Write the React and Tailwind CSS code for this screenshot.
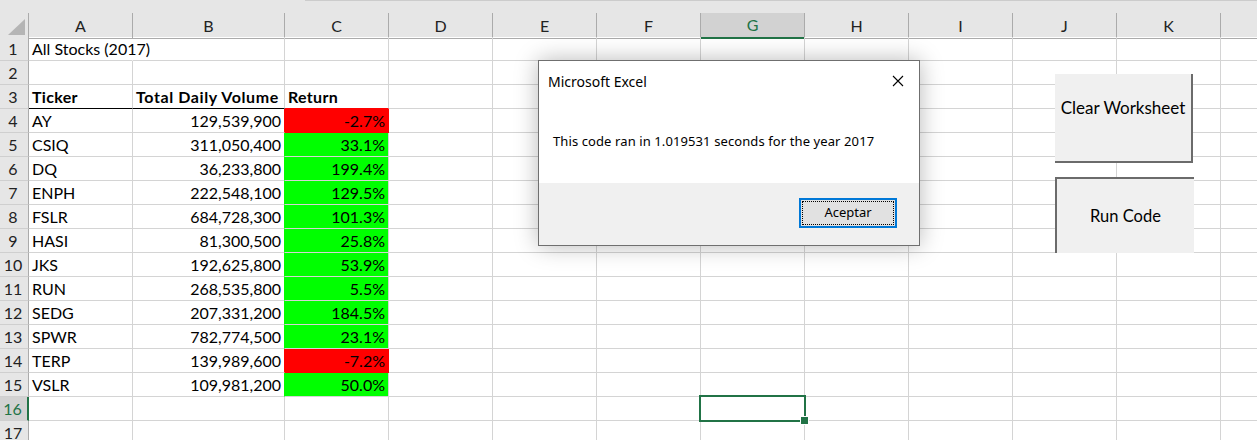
import React from "react";

const COLS = ["A", "B", "C", "D", "E", "F", "G", "H", "I", "J", "K", ""];
const GRID =
  "grid grid-cols-[29px_104px_152px_104px_104px_104px_104px_104px_104px_104px_104px_104px_1fr]";

const stocks = [
  ["AY", "129,539,900", "-2.7%", false],
  ["CSIQ", "311,050,400", "33.1%", true],
  ["DQ", "36,233,800", "199.4%", true],
  ["ENPH", "222,548,100", "129.5%", true],
  ["FSLR", "684,728,300", "101.3%", true],
  ["HASI", "81,300,500", "25.8%", true],
  ["JKS", "192,625,800", "53.9%", true],
  ["RUN", "268,535,800", "5.5%", true],
  ["SEDG", "207,331,200", "184.5%", true],
  ["SPWR", "782,774,500", "23.1%", true],
  ["TERP", "139,989,600", "-7.2%", false],
  ["VSLR", "109,981,200", "50.0%", true],
];

const cellFont = { fontFamily: "Lato, 'Liberation Sans', sans-serif" };

function Cell({ children, className = "" }) {
  return (
    <div
      className={`h-[24px] border-r border-b border-[#d4d4d4] flex items-center px-[3px] pt-[1px] whitespace-nowrap text-[16px] text-black ${className}`}
    >
      {children}
    </div>
  );
}

function RowHead({ n, active }) {
  return (
    <div
      className={`h-[24px] flex items-center justify-center pr-[2px] pt-[1px] text-[16px] border-b border-[#cfcfcf] ${
        active
          ? "bg-[#d2d2d2] text-[#217346] border-r-2 border-r-[#217346]"
          : "bg-[#e6e6e6] text-[#222] border-r border-r-[#ababab]"
      }`}
    >
      {n}
    </div>
  );
}

function SheetRow({ n }) {
  const s = n >= 4 && n <= 15 ? stocks[n - 4] : null;
  const fill = s ? (s[3] ? "bg-[#00ff00]" : "bg-[#ff0000]") : "";
  const fillBorder = s ? (s[3] ? "border-[#00ff00]" : "border-[#ff0000]") : "";
  const bRight = s ? (s[3] ? "border-r-[#00ff00]" : "border-r-[#ff0000]") : "";

  let a = null, b = null, c = null;
  let aCls = "", bCls = "", cCls = "";
  if (n === 1) {
    a = "All Stocks (2017)";
    aCls = "border-r-transparent overflow-visible";
  }
  if (n === 3) {
    a = "Ticker";
    b = "Total Daily Volume";
    c = "Return";
    aCls = "font-bold border-b-black tracking-[0.3px]";
    bCls = "font-bold border-b-black tracking-[0.6px]";
    cCls = "font-bold border-b-[#ff0000] tracking-[0.3px]";
  }
  if (s) {
    a = s[0];
    b = s[1];
    c = s[2];
    bCls = `justify-end ${bRight}`;
    cCls = `justify-end ${fill} ${fillBorder}`;
  }

  return (
    <div className={GRID}>
      <RowHead n={n} active={n === 16} />
      <Cell className={aCls}>{a}</Cell>
      <Cell className={bCls}>{b}</Cell>
      <Cell className={cCls}>{c}</Cell>
      {COLS.slice(3).map((col, i) => (
        <Cell key={i} className={col === "" ? "border-r-0" : ""} />
      ))}
    </div>
  );
}

function XIcon() {
  return (
    <svg width="12" height="12" viewBox="0 0 12 12">
      <path d="M1 1L11 11M11 1L1 11" stroke="#000" strokeWidth="1.1" />
    </svg>
  );
}

function Dialog() {
  return (
    <div
      className="absolute left-[538px] top-[60px] w-[382px] h-[186px] bg-white border border-[#6f6f6f] shadow-[0_0_22px_rgba(0,0,0,0.28)] flex flex-col"
      style={{ fontFamily: "'Segoe UI', 'Noto Sans', sans-serif" }}
    >
      <div className="h-[40px] flex items-center justify-between pl-[9px] pr-[15px] text-[14px] text-black">
        <span>Microsoft Excel</span>
        <XIcon />
      </div>
      <div className="flex-1 flex items-center pl-[14px] text-[13px] tracking-[0.1px] text-black">
        This code ran in 1.019531 seconds for the year 2017
      </div>
      <div className="h-[62px] bg-[#f0f0f0] flex justify-end items-start pt-[15px] pr-[22px]">
        <div className="w-[98px] h-[30px] border-2 border-[#0078d7] bg-[#e1e1e1] p-[1px]">
          <div className="w-full h-full border border-dotted border-black flex items-center justify-center text-[13px] text-black">
            Aceptar
          </div>
        </div>
      </div>
    </div>
  );
}

export default function App() {
  return (
    <div
      className="relative w-[1257px] h-[440px] overflow-hidden bg-white"
      style={cellFont}
    >
      <div className="h-[13px] bg-[#e6e6e6] flex">
        <div className="w-[305px]" />
        <div className="flex-1 h-[1px] bg-[#cccccc]" />
      </div>

      <div className={`${GRID} h-[24px] bg-[#e6e6e6]`}>
        <div className="border-r border-b border-[#ababab] flex items-end justify-end pr-[3px] pb-[3px]">
          <svg width="17" height="16" viewBox="0 0 17 16">
            <polygon points="17,0 17,16 0,16" fill="#b5b5b5" />
          </svg>
        </div>
        {COLS.map((col, i) =>
          col === "G" ? (
            <div
              key={i}
              className="bg-[#d2d2d2] border-r border-r-[#ababab] border-b-2 border-b-[#217346] flex items-center justify-center text-[16px] text-[#217346]"
            >
              {col}
            </div>
          ) : (
            <div
              key={i}
              className={`border-b border-[#ababab] flex items-center justify-center text-[16px] text-[#222] ${
                col ? "border-r" : ""
              }`}
            >
              {col}
            </div>
          )
        )}
      </div>

      {Array.from({ length: 17 }, (_, i) => (
        <SheetRow key={i} n={i + 1} />
      ))}

      {/* active cell G16 */}
      <div className="absolute left-[699px] top-[395px] w-[107px] h-[27px] border-2 border-[#217346]" />
      <div className="absolute left-[800px] top-[416px] w-[9px] h-[9px] bg-[#217346] border border-white" />

      {/* form buttons */}
      <div className="absolute left-[1055px] top-[74px] w-[138px] h-[89px] bg-[#f0f0f0] border-r-2 border-b-2 border-[#6b6b6b] flex items-center justify-center pb-[20px] text-[17px] text-black">
        Clear Worksheet
      </div>
      <div className="absolute left-[1055px] top-[177px] w-[139px] h-[76px] bg-[#f0f0f0] border-l-2 border-t-2 border-[#6b6b6b] flex items-center justify-center text-[16.5px] text-black">
        Run Code
      </div>

      <Dialog />
    </div>
  );
}
